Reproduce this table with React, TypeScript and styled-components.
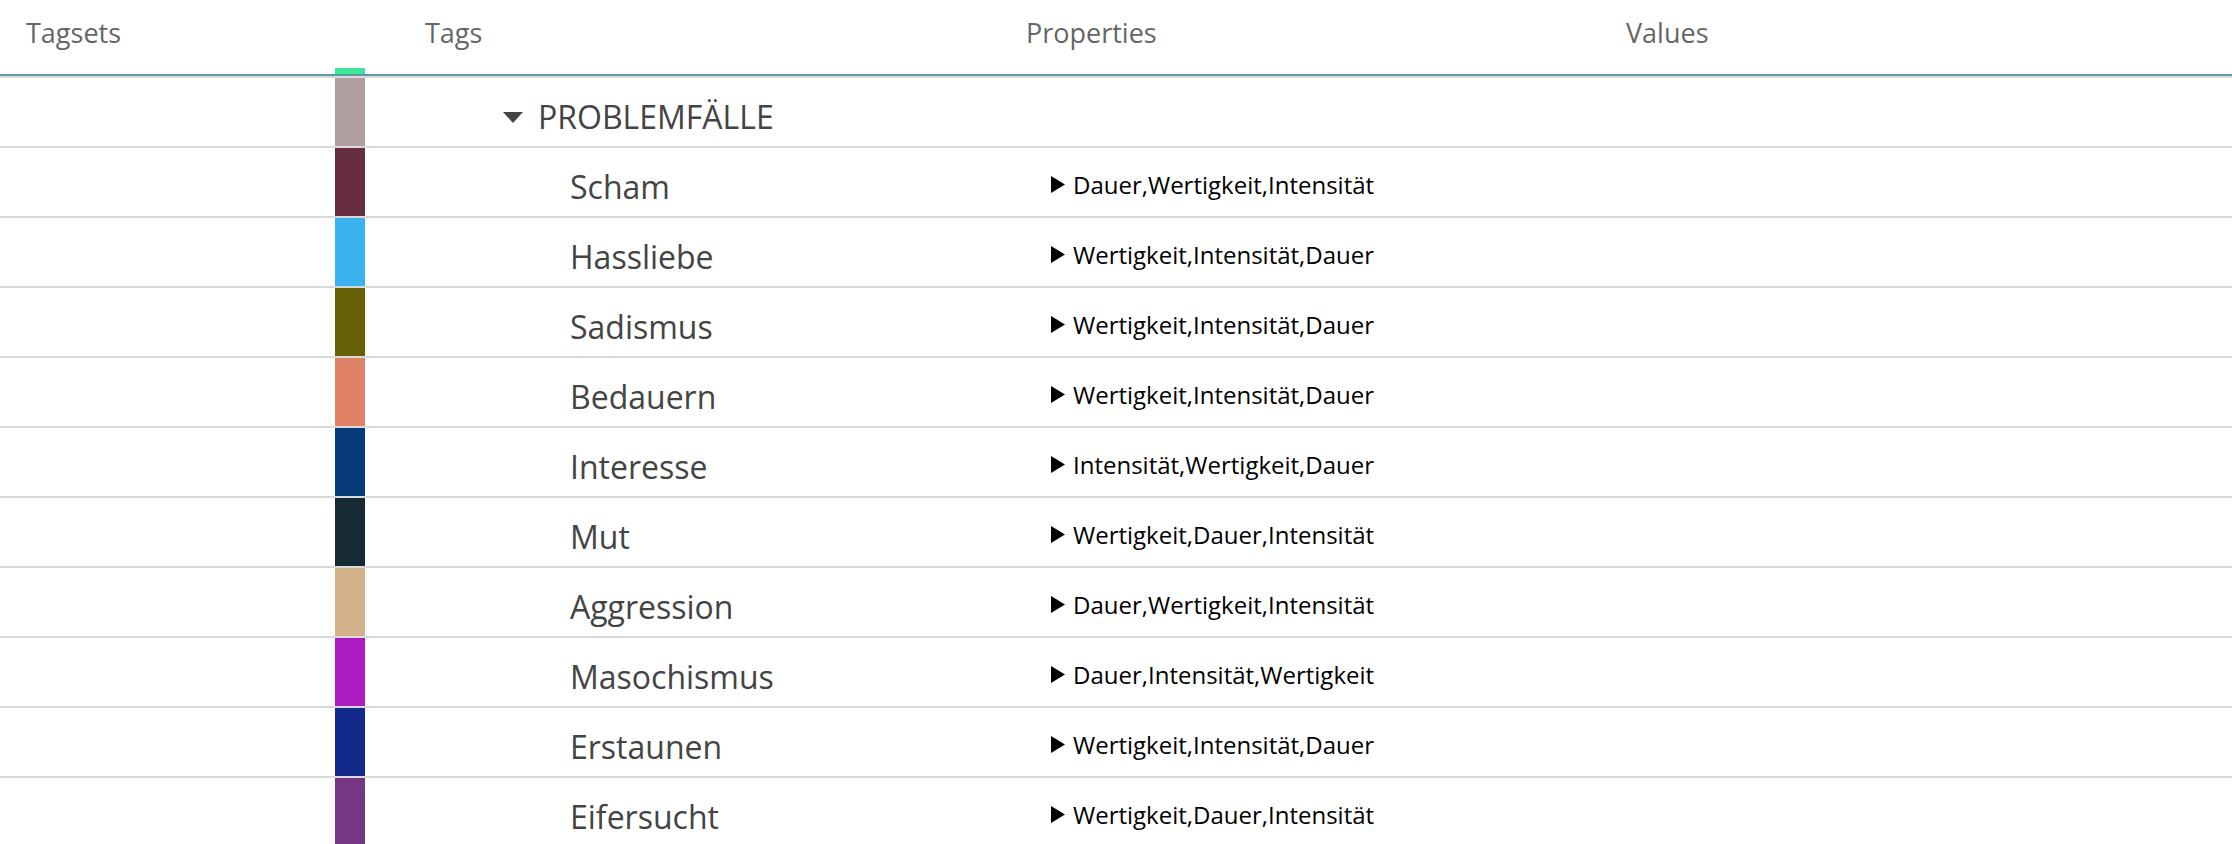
import React from "react";
import styled, { createGlobalStyle } from "styled-components";

const Global = createGlobalStyle`
  html, body { margin: 0; padding: 0; background: #fff; }
  body { font-family: "Open Sans", "Noto Sans", sans-serif; overflow: hidden; }
`;

const COLS = "335px 30px 660px 601px 1fr";

const Page = styled.div`
  width: 2232px;
  height: 844px;
  overflow: hidden;
  background: #fff;
`;

const Header = styled.div`
  display: grid;
  grid-template-columns: ${COLS};
  height: 74px;
  border-bottom: 2px solid #5a9aa0;
`;

const HeadCell = styled.div<{ $pad?: number }>`
  padding-top: 14px;
  padding-left: ${(p) => p.$pad ?? 0}px;
  font-size: 27px;
  line-height: normal;
  color: #666;
  white-space: nowrap;
`;

const HeadSwatch = styled.div<{ $color: string }>`
  align-self: end;
  height: 6px;
  background: ${(p) => p.$color};
`;

const Row = styled.div`
  display: grid;
  grid-template-columns: ${COLS};
  height: 68px;
  border-top: 2px solid #d9d9d9;
`;

const Swatch = styled.div<{ $color: string }>`
  background: ${(p) => p.$color};
`;

const TagCell = styled.div<{ $indent: number }>`
  display: flex;
  align-items: center;
  align-self: start;
  padding-top: 17px;
  padding-left: ${(p) => p.$indent}px;
  font-size: 32px;
  line-height: normal;
  color: #444;
  white-space: nowrap;
`;

const Caret = styled.svg`
  width: 20px;
  height: 12px;
  margin-right: 15px;
  margin-top: 2px;
  flex: none;
`;

const PropCell = styled.div`
  display: flex;
  align-items: center;
  align-self: start;
  padding-top: 20px;
  padding-left: 26px;
  font-size: 24px;
  line-height: normal;
  color: #000;
  white-space: nowrap;
`;

const PlayIcon = styled.svg`
  width: 14px;
  height: 17px;
  margin-right: 8px;
  flex: none;
`;

const tags: { name: string; color: string; props: string }[] = [
  { name: "Scham", color: "#672d41", props: "Dauer,Wertigkeit,Intensität" },
  { name: "Hassliebe", color: "#3bb3f0", props: "Wertigkeit,Intensität,Dauer" },
  { name: "Sadismus", color: "#665f06", props: "Wertigkeit,Intensität,Dauer" },
  { name: "Bedauern", color: "#e08265", props: "Wertigkeit,Intensität,Dauer" },
  { name: "Interesse", color: "#073a78", props: "Intensität,Wertigkeit,Dauer" },
  { name: "Mut", color: "#162a34", props: "Wertigkeit,Dauer,Intensität" },
  { name: "Aggression", color: "#d3b289", props: "Dauer,Wertigkeit,Intensität" },
  { name: "Masochismus", color: "#ad1cc1", props: "Dauer,Intensität,Wertigkeit" },
  { name: "Erstaunen", color: "#132a8b", props: "Wertigkeit,Intensität,Dauer" },
  { name: "Eifersucht", color: "#763682", props: "Wertigkeit,Dauer,Intensität" },
];

const Empty = styled.div``;

export default function App() {
  return (
    <Page>
      <Global />
      <Header>
        <HeadCell $pad={26}>Tagsets</HeadCell>
        <HeadSwatch $color="#3ce79b" />
        <HeadCell $pad={60}>Tags</HeadCell>
        <HeadCell $pad={1}>Properties</HeadCell>
        <HeadCell>Values</HeadCell>
      </Header>
      <Row>
        <Empty />
        <Swatch $color="#ae9ea0" />
        <TagCell $indent={138}>
          <Caret viewBox="0 0 20 12">
            <polygon points="0,0 20,0 10,11" fill="#444" />
          </Caret>
          PROBLEMFÄLLE
        </TagCell>
        <Empty />
        <Empty />
      </Row>
      {tags.map((t) => (
        <Row key={t.name}>
          <Empty />
          <Swatch $color={t.color} />
          <TagCell $indent={205}>{t.name}</TagCell>
          <PropCell>
            <PlayIcon viewBox="0 0 14 17">
              <polygon points="0,0 14,8.5 0,17" fill="#000" />
            </PlayIcon>
            {t.props}
          </PropCell>
          <Empty />
        </Row>
      ))}
    </Page>
  );
}
